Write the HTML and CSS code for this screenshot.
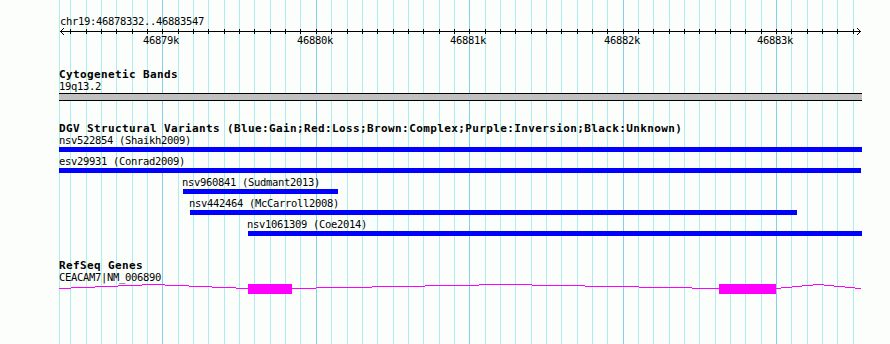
FILE: index.html
```html
<!DOCTYPE html>
<html>
<head>
<meta charset="utf-8">
<link rel="stylesheet" href="styles.css">
</head>
<body>
<div class="browser">
  <svg class="grid" width="890" height="344" aria-hidden="true">
    <rect class="minor" x="59" y="0" width="1" height="344"/>
    <rect class="minor" x="70" y="0" width="1" height="344"/>
    <rect class="minor" x="86" y="0" width="1" height="344"/>
    <rect class="minor" x="101" y="0" width="1" height="344"/>
    <rect class="minor" x="116" y="0" width="1" height="344"/>
    <rect class="minor" x="132" y="0" width="1" height="344"/>
    <rect class="minor" x="147" y="0" width="1" height="344"/>
    <rect class="major" x="162" y="0" width="1" height="344"/>
    <rect class="minor" x="178" y="0" width="1" height="344"/>
    <rect class="minor" x="193" y="0" width="1" height="344"/>
    <rect class="minor" x="208" y="0" width="1" height="344"/>
    <rect class="minor" x="224" y="0" width="1" height="344"/>
    <rect class="minor" x="239" y="0" width="1" height="344"/>
    <rect class="minor" x="254" y="0" width="1" height="344"/>
    <rect class="minor" x="270" y="0" width="1" height="344"/>
    <rect class="minor" x="285" y="0" width="1" height="344"/>
    <rect class="minor" x="300" y="0" width="1" height="344"/>
    <rect class="major" x="316" y="0" width="1" height="344"/>
    <rect class="minor" x="331" y="0" width="1" height="344"/>
    <rect class="minor" x="347" y="0" width="1" height="344"/>
    <rect class="minor" x="362" y="0" width="1" height="344"/>
    <rect class="minor" x="377" y="0" width="1" height="344"/>
    <rect class="minor" x="393" y="0" width="1" height="344"/>
    <rect class="minor" x="408" y="0" width="1" height="344"/>
    <rect class="minor" x="423" y="0" width="1" height="344"/>
    <rect class="minor" x="439" y="0" width="1" height="344"/>
    <rect class="minor" x="454" y="0" width="1" height="344"/>
    <rect class="major" x="469" y="0" width="1" height="344"/>
    <rect class="minor" x="485" y="0" width="1" height="344"/>
    <rect class="minor" x="500" y="0" width="1" height="344"/>
    <rect class="minor" x="515" y="0" width="1" height="344"/>
    <rect class="minor" x="531" y="0" width="1" height="344"/>
    <rect class="minor" x="546" y="0" width="1" height="344"/>
    <rect class="minor" x="561" y="0" width="1" height="344"/>
    <rect class="minor" x="577" y="0" width="1" height="344"/>
    <rect class="minor" x="592" y="0" width="1" height="344"/>
    <rect class="minor" x="607" y="0" width="1" height="344"/>
    <rect class="major" x="623" y="0" width="1" height="344"/>
    <rect class="minor" x="638" y="0" width="1" height="344"/>
    <rect class="minor" x="653" y="0" width="1" height="344"/>
    <rect class="minor" x="669" y="0" width="1" height="344"/>
    <rect class="minor" x="684" y="0" width="1" height="344"/>
    <rect class="minor" x="699" y="0" width="1" height="344"/>
    <rect class="minor" x="715" y="0" width="1" height="344"/>
    <rect class="minor" x="730" y="0" width="1" height="344"/>
    <rect class="minor" x="745" y="0" width="1" height="344"/>
    <rect class="minor" x="761" y="0" width="1" height="344"/>
    <rect class="major" x="776" y="0" width="1" height="344"/>
    <rect class="minor" x="791" y="0" width="1" height="344"/>
    <rect class="minor" x="807" y="0" width="1" height="344"/>
    <rect class="minor" x="822" y="0" width="1" height="344"/>
    <rect class="minor" x="837" y="0" width="1" height="344"/>
    <rect class="minor" x="853" y="0" width="1" height="344"/>
  </svg>

  <div class="ruler">
    <svg width="890" height="49">
      <text class="ruler-text" x="60" y="25">chr19:46878332..46883547</text>
      <g class="axis">
        <rect x="60" y="31" width="801" height="1"/>
        <rect x="61" y="30" width="1" height="1"/>
        <rect x="62" y="29" width="1" height="1"/>
        <rect x="63" y="28" width="1" height="1"/>
        <rect x="61" y="32" width="1" height="1"/>
        <rect x="62" y="33" width="1" height="1"/>
        <rect x="63" y="34" width="1" height="1"/>
        <rect x="859" y="30" width="1" height="1"/>
        <rect x="858" y="29" width="1" height="1"/>
        <rect x="857" y="28" width="1" height="1"/>
        <rect x="859" y="32" width="1" height="1"/>
        <rect x="858" y="33" width="1" height="1"/>
        <rect x="857" y="34" width="1" height="1"/>
        <path d="M70 29h1v5h-1zM86 29h1v5h-1zM101 29h1v5h-1zM116 29h1v5h-1zM132 29h1v5h-1zM147 29h1v5h-1zM162 29h1v5h-1zM178 29h1v5h-1zM193 29h1v5h-1zM208 29h1v5h-1zM224 29h1v5h-1zM239 29h1v5h-1zM254 29h1v5h-1zM270 29h1v5h-1zM285 29h1v5h-1zM300 29h1v5h-1zM316 29h1v5h-1zM331 29h1v5h-1zM347 29h1v5h-1zM362 29h1v5h-1zM377 29h1v5h-1zM393 29h1v5h-1zM408 29h1v5h-1zM423 29h1v5h-1zM439 29h1v5h-1zM454 29h1v5h-1zM469 29h1v5h-1zM485 29h1v5h-1zM500 29h1v5h-1zM515 29h1v5h-1zM531 29h1v5h-1zM546 29h1v5h-1zM561 29h1v5h-1zM577 29h1v5h-1zM592 29h1v5h-1zM607 29h1v5h-1zM623 29h1v5h-1zM638 29h1v5h-1zM653 29h1v5h-1zM669 29h1v5h-1zM684 29h1v5h-1zM699 29h1v5h-1zM715 29h1v5h-1zM730 29h1v5h-1zM745 29h1v5h-1zM761 29h1v5h-1zM776 29h1v5h-1zM791 29h1v5h-1zM807 29h1v5h-1zM822 29h1v5h-1zM837 29h1v5h-1zM853 29h1v5h-1z"/>
      </g>
      <text class="ruler-text" x="143" y="44">46879k</text>
      <text class="ruler-text" x="297" y="44">46880k</text>
      <text class="ruler-text" x="450" y="44">46881k</text>
      <text class="ruler-text" x="604" y="44">46882k</text>
      <text class="ruler-text" x="757" y="44">46883k</text>
    </svg>
  </div>

  <section class="track">
    <h2 class="track-title">Cytogenetic Bands</h2>
    <div class="label inset">19q13.2</div>
    <div class="band"></div>
  </section>

  <section class="track">
    <h2 class="track-title">DGV Structural Variants (Blue:Gain;Red:Loss;Brown:Complex;Purple:Inversion;Black:Unknown)</h2>
    <div class="sv-row" style="--x:59px;--w:803px">
      <div class="label">nsv522854 (Shaikh2009)</div>
      <div class="sv-bar"></div>
    </div>
    <div class="sv-row" style="--x:59px;--w:802px">
      <div class="label">esv29931 (Conrad2009)</div>
      <div class="sv-bar"></div>
    </div>
    <div class="sv-row" style="--x:182px;--w:155px">
      <div class="label">nsv960841 (Sudmant2013)</div>
      <div class="sv-bar shift"></div>
    </div>
    <div class="sv-row" style="--x:189px;--w:607px">
      <div class="label">nsv442464 (McCarroll2008)</div>
      <div class="sv-bar shift"></div>
    </div>
    <div class="sv-row" style="--x:247px;--w:614px">
      <div class="label">nsv1061309 (Coe2014)</div>
      <div class="sv-bar shift"></div>
    </div>
  </section>

  <section class="track">
    <h2 class="track-title">RefSeq Genes</h2>
    <div class="label inset">CEACAM7|NM_006890</div>
    <svg class="gene" width="803" height="11">
      <rect class="intron" x="0" y="5" width="12" height="1"/>
      <rect class="intron" x="12" y="4" width="24" height="1"/>
      <rect class="intron" x="36" y="3" width="23" height="1"/>
      <rect class="intron" x="59" y="2" width="24" height="1"/>
      <rect class="intron" x="83" y="1" width="23" height="1"/>
      <rect class="intron" x="106" y="2" width="24" height="1"/>
      <rect class="intron" x="130" y="3" width="23" height="1"/>
      <rect class="intron" x="153" y="4" width="24" height="1"/>
      <rect class="intron" x="177" y="5" width="12" height="1"/>
      <rect class="exon" x="189" y="1" width="44" height="10"/>
      <rect class="intron" x="233" y="5" width="24" height="1"/>
      <rect class="intron" x="257" y="4" width="56" height="1"/>
      <rect class="intron" x="313" y="3" width="53" height="1"/>
      <rect class="intron" x="366" y="2" width="54" height="1"/>
      <rect class="intron" x="420" y="1" width="53" height="1"/>
      <rect class="intron" x="473" y="2" width="53" height="1"/>
      <rect class="intron" x="526" y="3" width="54" height="1"/>
      <rect class="intron" x="580" y="4" width="53" height="1"/>
      <rect class="intron" x="633" y="5" width="27" height="1"/>
      <rect class="exon" x="660" y="1" width="57" height="10"/>
      <rect class="intron" x="717" y="5" width="5" height="1"/>
      <rect class="intron" x="722" y="4" width="11" height="1"/>
      <rect class="intron" x="733" y="3" width="10" height="1"/>
      <rect class="intron" x="743" y="2" width="11" height="1"/>
      <rect class="intron" x="754" y="1" width="11" height="1"/>
      <rect class="intron" x="765" y="2" width="10" height="1"/>
      <rect class="intron" x="775" y="3" width="11" height="1"/>
      <rect class="intron" x="786" y="4" width="10" height="1"/>
      <rect class="intron" x="796" y="5" width="6" height="1"/>
    </svg>
  </section>
</div>
</body>
</html>
```

FILE: styles.css
```css
html,
body {
  margin: 0;
  background: #fcfefc;
}

.browser {
  position: relative;
  display: flex;
  flex-direction: column;
  width: 890px;
  height: 344px;
  overflow: hidden;
  background: #fcfefc;
  color: #000;
  font-family: "DejaVu Sans Mono", "Liberation Mono", monospace;
}

.grid {
  position: absolute;
  left: 0;
  top: 0;
  z-index: 0;
}

.grid .minor {
  fill: #aeeeee;
}

.grid .major {
  fill: #87ceeb;
}

.ruler,
.track {
  position: relative;
  z-index: 1;
}

.ruler {
  height: 49px;
  flex: none;
}

.ruler svg {
  display: block;
}

.ruler-text {
  font-family: "DejaVu Sans Mono", monospace;
  font-size: 10.5px;
  letter-spacing: -0.32px;
  fill: #000;
}

.axis {
  fill: #000;
}

.track {
  flex: none;
  margin-top: 19px;
}

.track-title {
  margin: 0;
  padding-left: 59px;
  font-size: 11px;
  font-weight: bold;
  letter-spacing: 0.38px;
  line-height: 13px;
  white-space: nowrap;
}

.label {
  font-size: 10.5px;
  letter-spacing: -0.32px;
  line-height: 11px;
  white-space: nowrap;
}

.inset {
  padding-left: 59px;
}

.band {
  margin: 1px 0 2px 59px;
  width: 803px;
  height: 6px;
  border-top: 1px solid #000;
  border-bottom: 1px solid #000;
  background: #c0c0c0;
}

.sv-row {
  margin-left: var(--x);
  height: 21px;
}

.sv-bar {
  margin-top: 1px;
  width: var(--w);
  height: 5px;
  background: #0000ff;
}

.sv-bar.shift {
  margin-left: 1px;
}

.gene {
  display: block;
  margin-left: 59px;
}

.gene .intron,
.gene .exon {
  fill: #ff00ff;
}
```
